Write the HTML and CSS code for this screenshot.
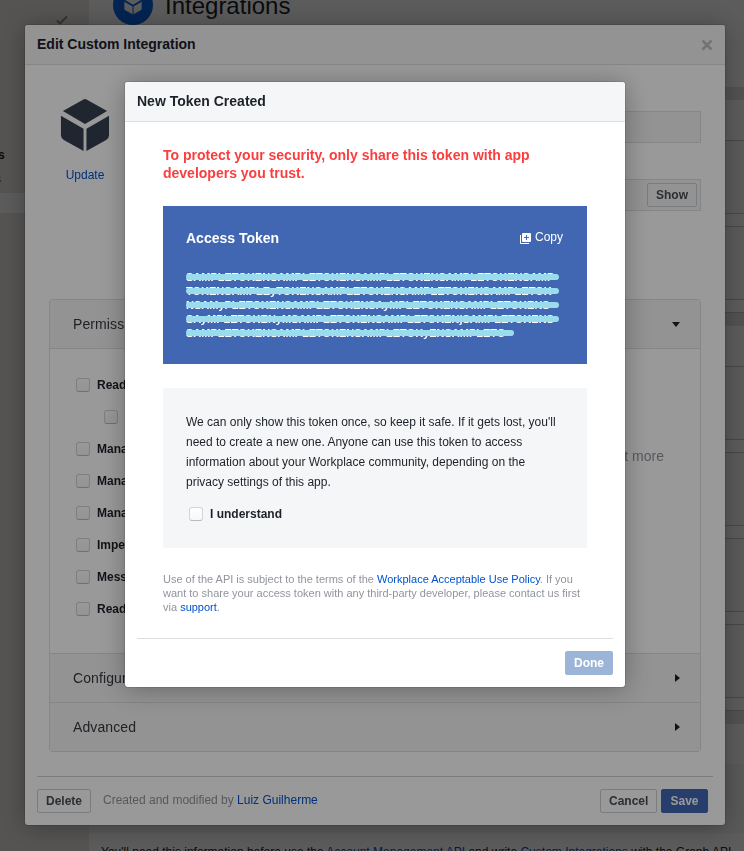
FILE: index.html
```html
<!DOCTYPE html>
<html lang="en">
<head>
<meta charset="utf-8">
<title>Integrations</title>
<link rel="stylesheet" href="styles.css">
</head>
<body>
<div class="page">
  <aside class="side">
    <svg class="side-check" width="12" height="10" viewBox="0 0 12 10"><path d="M1 5.500L4 8.500L11 1.500" fill="none" stroke="#8a8c8e" stroke-width="1.900"/></svg>
    <span class="side-strong">s</span>
    <span class="side-item">s</span>
    <div class="side-active"></div>
  </aside>
  <main class="main">
    <header class="main-head">
      <span class="badge"><svg width="18" height="20" viewBox="0 0 52 54"><use href="#cube"/></svg></span>
      <h1>Integrations</h1>
    </header>
    <div class="gap"></div>
    <div class="row head"></div>
    <div class="row tall"></div><div class="row slim"></div><div class="row tall"></div><div class="row slim"></div>
    <div class="gap"></div>
    <div class="row head"></div>
    <div class="row tall"></div><div class="row slim"></div><div class="row tall"></div><div class="row slim"></div><div class="row tall"></div><div class="row slim"></div><div class="row tall"></div><div class="row slim"></div>
    <div class="gap"></div>
    <div class="plain"></div>
    <div class="note-bg"></div>
    <p class="note">You'll need this information before use the <a>Account Management API</a> and write <a>Custom Integrations</a> with the Graph API.</p>
  </main>
</div>

<div class="shade">
  <section class="dialog edit">
    <header class="bar"><h2>Edit Custom Integration</h2>
      <svg width="12" height="12" viewBox="0 0 12 12"><path d="M1.500 1.500L10.500 10.500M10.500 1.500L1.500 10.500" stroke="#bcc0c7" stroke-width="2.600"/></svg>
    </header>
    <div class="profile">
      <div class="avatar">
        <svg width="50" height="54" viewBox="0 0 52 54"><defs><g id="cube" fill="currentColor"><path d="M26 0Q27 0 28.500 1L49 12.500L26 26L3 12.500L23.500 1Q25 0 26 0Z"/><path d="M1 17.500L24.500 31V54L4 42.500Q1 41 1 38Z"/><path d="M51 17.500L27.500 31V54L48 42.500Q51 41 51 38Z"/></g></defs><use href="#cube"/></svg>
        <a>Update</a>
      </div>
      <div class="fields">
        <div class="field"></div>
        <div class="field secret"><button class="btn">Show</button></div>
      </div>
    </div>
    <div class="accordion">
      <div class="acc-head"><span>Permissions</span><i class="down"></i></div>
      <div class="perms">
        <div class="checks">
          <label><i class="box"></i>Read content</label>
          <label class="sub"><i class="box"></i></label>
          <label><i class="box"></i>Manage</label>
          <label><i class="box"></i>Manage</label>
          <label><i class="box"></i>Manage</label>
          <label><i class="box"></i>Impersonate</label>
          <label><i class="box"></i>Message</label>
          <label><i class="box"></i>Read</label>
        </div>
        <p class="hint">Select to find out more</p>
      </div>
      <div class="acc-head"><span>Configure</span><i class="right"></i></div>
      <div class="acc-head"><span>Advanced</span><i class="right"></i></div>
    </div>
    <footer class="edit-foot">
      <button class="btn delete">Delete</button>
      <p>Created and modified by <a>Luiz Guilherme</a></p>
      <button class="btn cancel">Cancel</button>
      <button class="btn primary">Save</button>
    </footer>
  </section>
</div>

<div class="shade">
  <section class="dialog token">
    <header class="bar"><h2>New Token Created</h2></header>
    <div class="token-body">
      <p class="warn">To protect your security, only share this token with app<br>developers you trust.</p>
      <div class="access">
        <div class="access-head"><h3>Access Token</h3>
          <span class="copy"><svg width="11" height="11" viewBox="0 0 11 11"><path d="M.5 2V10.500H9" fill="none" stroke="#fff"/><path fill="#fff" fill-rule="evenodd" d="M3 0H10Q11 0 11 1V8Q11 9 10 9H3Q2 9 2 8V1Q2 0 3 0ZM6 2V4H4V5H6V7H7V5H9V4H7V2Z"/></svg>Copy</span>
        </div>
        <div class="code">
          <span>SAMPLETOKENSAMPLETOKENSAMPLETOKENSAMPLETOKENSAMP</span>
          <span>TOKENSAMPLEyTOKENSAMPLETOKENSAMPLETOKENSAMPLETOK</span>
          <span>NSAMyPLETOKENSAMPLETOKENSAyMPLETOKENSAMPLETOKENS</span>
          <span>SAyMPLETOKENyMSAMPLETOKENSAMPLETOKENjSAMPLETOKENS</span>
          <span class="last">SAMPLETOKENSAMPLETOKENSAMPLETOKyENSAMPLETO</span>
        </div>
      </div>
      <div class="notice">
        <p>We can only show this token once, so keep it safe. If it gets lost, you'll<br>need to create a new one. Anyone can use this token to access<br>information about your Workplace community, depending on the<br>privacy settings of this app.</p>
        <label><i class="box"></i>I understand</label>
      </div>
      <p class="terms">Use of the API is subject to the terms of the <a>Workplace Acceptable Use Policy</a>. If you<br>want to share your access token with any third-party developer, please contact us first<br>via <a>support</a>.</p>
    </div>
    <footer class="token-foot"><button class="btn primary done">Done</button></footer>
  </section>
</div>
</body>
</html>
```
FILE: styles.css
```css
* { box-sizing: border-box; }
body { margin: 0; height: 851px; overflow: hidden; font: 12px/16px "Liberation Sans", Arial, sans-serif; color: #1d2129; }
h1, h2, h3, p { margin: 0; }
a { color: #0052cc; }

.page { display: flex; height: 851px; overflow: hidden; background: #efeae5; }
.side { width: 89px; flex: none; display: flex; flex-direction: column; }
.side-check { margin: 15px 0 0 56px; flex: none; }
.side-strong { margin-top: 122px; font-weight: bold; margin-left: -2px; }
.side-item { margin: 8px 0 0 -5px; color: #4b4f56; }
.side-active { margin-top: 6px; height: 20px; background: #fff; }
.main { flex: 1; min-width: 0; background: #fff; }
.main-head { height: 87px; display: flex; padding-left: 24px; gap: 12px; }
.main-head h1 { font: 24px/30px "Liberation Sans", Arial, sans-serif; margin-top: -9px; }
.badge { width: 40px; height: 40px; margin-top: -15px; border-radius: 50%; background: #0866e6; color: #fff; display: grid; place-items: center; }
.gap { height: 13px; background: #e6e4e0; }
.row { border-bottom: 1px solid #c8c8c8; background: #fbfbfb; }
.row.head { height: 41px; background: #fff; }
.row.tall { height: 73px; }
.row.slim { height: 13px; background: #fff; }
.plain { height: 40px; }
.note-bg { height: 69px; background: #f5f6f7; }
.note { padding: 11px 0 0 12px; white-space: nowrap; }

.shade { position: fixed; inset: 0; background: rgba(0, 0, 0, .4); }
.dialog { position: absolute; background: #fff; border-radius: 3px; box-shadow: 0 2px 26px rgba(0, 0, 0, .3), 0 0 0 1px rgba(0, 0, 0, .1); display: flex; flex-direction: column; }
.edit { left: 25px; top: 25px; width: 700px; height: 800px; }
.token { left: 125px; top: 82px; width: 500px; height: 605px; }
.bar { height: 40px; flex: none; padding: 0 12px; display: flex; align-items: center; justify-content: space-between; background: #f5f6f7; border-bottom: 1px solid #dddfe2; border-radius: 3px 3px 0 0; }
.bar h2 { font-size: 14px; line-height: 18px; padding-bottom: 2px; }

.profile { display: flex; height: 234px; padding: 0 24px 0 35px; justify-content: space-between; }
.avatar { width: 50px; display: flex; flex-direction: column; align-items: center; padding-top: 33px; color: #36404f; }
.avatar a { margin-top: 15px; }
.fields { width: 500px; padding-top: 46px; }
.field { height: 32px; border: 1px solid #dddfe2; background: #f5f6f7; }
.secret { margin-top: 36px; padding: 3px; display: flex; justify-content: flex-end; }
.btn { height: 24px; padding: 0 8px; font: bold 12px/22px "Liberation Sans", Arial, sans-serif; color: #4b4f56; background: #fff; border: 1px solid #ccd0d5; border-radius: 2px; }
.btn.primary { background: #4267b2; border-color: #4267b2; color: #fff; }
.secret .btn { width: 50px; background: #f5f6f7; }

.accordion { margin: 0 24px; border: 1px solid #dddfe2; border-radius: 3px; height: 453px; }
.acc-head { height: 49px; display: flex; align-items: center; justify-content: space-between; padding: 0 20px 0 23px; background: #f5f6f7; border-bottom: 1px solid #dddfe2; font-size: 14px; letter-spacing: .1px; color: #36393f; }
.acc-head:last-child { border-bottom: 0; height: 48px; }
.perms { height: 305px; padding: 20px 36px 0 26px; display: flex; justify-content: space-between; border-bottom: 1px solid #dddfe2; }
.checks label, .notice label { display: flex; align-items: center; gap: 7px; height: 32px; font-weight: bold; }
.checks .sub { padding-left: 28px; }
.box { width: 14px; height: 14px; border: 1px solid #d4d4d4; border-bottom-color: #bbb; border-radius: 3px; background: linear-gradient(#fff, #f7f7f7); }
.hint { margin-top: 77px; font-size: 14px; line-height: 20px; color: #90949c; }
.down { border: 4px solid transparent; border-top: 5px solid #1d2129; border-bottom: 0; }
.right { border: 4px solid transparent; border-left: 5px solid #1d2129; border-right: 0; }

.edit-foot { margin: 24px 12px 0; border-top: 1px solid #ccd0d5; padding: 12px 5px 0 0; display: flex; }
.delete { width: 54px; }
.edit-foot p { flex: 1; margin: 3px 0 0 12px; color: #90949c; }
.cancel { width: 57px; margin-right: 4px; }
.edit-foot .primary { width: 47px; }

.token-body { padding: 24px 38px 0; }
.warn { font-size: 14px; line-height: 18px; font-weight: bold; color: #fa3e3e; }
.access { margin-top: 24px; height: 158px; padding: 22px 24px 0 23px; background: #4267b2; color: #fff; }
.access-head { display: flex; justify-content: space-between; }
.access-head h3 { font-size: 14px; line-height: 20px; }
.copy { display: flex; gap: 4px; line-height: 18px; }
.copy svg { margin-top: 5px; }
.code { margin-top: 22px; }
.code span { display: block; position: relative; width: 373px; height: 14px; white-space: nowrap; font: bold 11px/15px "Liberation Sans", Arial, sans-serif; }
.code .last { width: 328px; }
.code span::after { content: ""; position: absolute; left: 0; right: 0; top: 4px; height: 6px; border-radius: 3px; background: #9bdcec; }
.notice { margin-top: 24px; height: 160px; padding: 24px 24px 0 23px; background: #f5f6f7; }
.notice p { line-height: 20px; }
.notice label { margin: 6px 0 0 3px; }
.terms { margin-top: 24px; font-size: 11px; line-height: 14px; color: #90949c; white-space: nowrap; }
.token-foot { margin: auto 12px 0; height: 49px; border-top: 1px solid #dddfe2; padding-top: 12px; text-align: right; }
.done { width: 48px; }
.btn.done { background: #9cb4d8; border-color: #9cb4d8; }
```
